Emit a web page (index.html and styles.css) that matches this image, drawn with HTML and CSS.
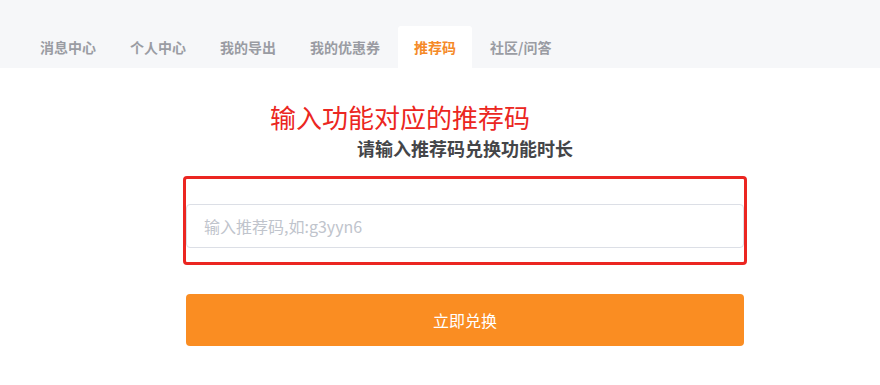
FILE: index.html
```html
<!DOCTYPE html>
<html lang="zh-CN">
<head>
<meta charset="utf-8">
<title>推荐码</title>
<link rel="stylesheet" href="styles.css">
</head>
<body>
<div class="nav">
  <div class="tabs">
    <div class="tab">消息中心</div>
    <div class="tab">个人中心</div>
    <div class="tab">我的导出</div>
    <div class="tab">我的优惠券</div>
    <div class="tab active">推荐码</div>
    <div class="tab">社区/问答</div>
  </div>
</div>
<div class="content">
  <div class="note">输入功能对应的推荐码</div>
  <div class="subtitle">请输入推荐码兑换功能时长</div>
  <div class="mark">
    <input class="code-input" type="text" placeholder="输入推荐码,如:g3yyn6">
  </div>
  <button class="submit" type="button">立即兑换</button>
</div>
</body>
</html>
```
FILE: styles.css
```css
html, body {
  margin: 0;
  padding: 0;
  background: #ffffff;
  font-family: "Noto Sans CJK SC", "Noto Sans", sans-serif;
}

.nav {
  height: 68px;
  background: #f6f7f9;
  display: flex;
  align-items: flex-end;
}

.tabs {
  display: flex;
  gap: 2px;
  padding-left: 24px;
}

.tab {
  height: 42px;
  line-height: 42px;
  padding: 0 16px;
  font-size: 14px;
  font-weight: 700;
  color: #9a9ca3;
  border-radius: 3px 3px 0 0;
}

.tab.active {
  background: #ffffff;
  color: #f58a28;
}

.content {
  margin-left: 186px;
  width: 558px;
  display: flex;
  flex-direction: column;
}

.note {
  margin-top: 34px;
  margin-left: 84px;
  font-size: 26px;
  line-height: 30px;
  color: #eb2621;
}

.subtitle {
  margin-top: 4px;
  font-size: 18px;
  line-height: 24px;
  font-weight: 700;
  color: #444548;
  text-align: center;
}

.mark {
  margin-top: 16px;
  margin-left: -3px;
  width: 558px;
  border: 3px solid #eb2621;
  border-radius: 4px;
  padding: 25px 0 14px;
}

.code-input {
  display: block;
  box-sizing: border-box;
  width: 558px;
  height: 44px;
  margin: 0;
  padding: 0 17px;
  border: 1px solid #dcdfe6;
  border-radius: 4px;
  font-family: "Noto Sans CJK SC", "Noto Sans", sans-serif;
  font-size: 16px;
  color: #606266;
  outline: none;
  background: #ffffff;
}

.code-input::placeholder {
  color: #c0c4cc;
}

.submit {
  margin-top: 29px;
  height: 52px;
  width: 558px;
  border: none;
  border-radius: 4px;
  background: #fa8d22;
  color: #ffffff;
  font-family: "Noto Sans CJK SC", "Noto Sans", sans-serif;
  font-size: 16px;
  cursor: pointer;
}
```
